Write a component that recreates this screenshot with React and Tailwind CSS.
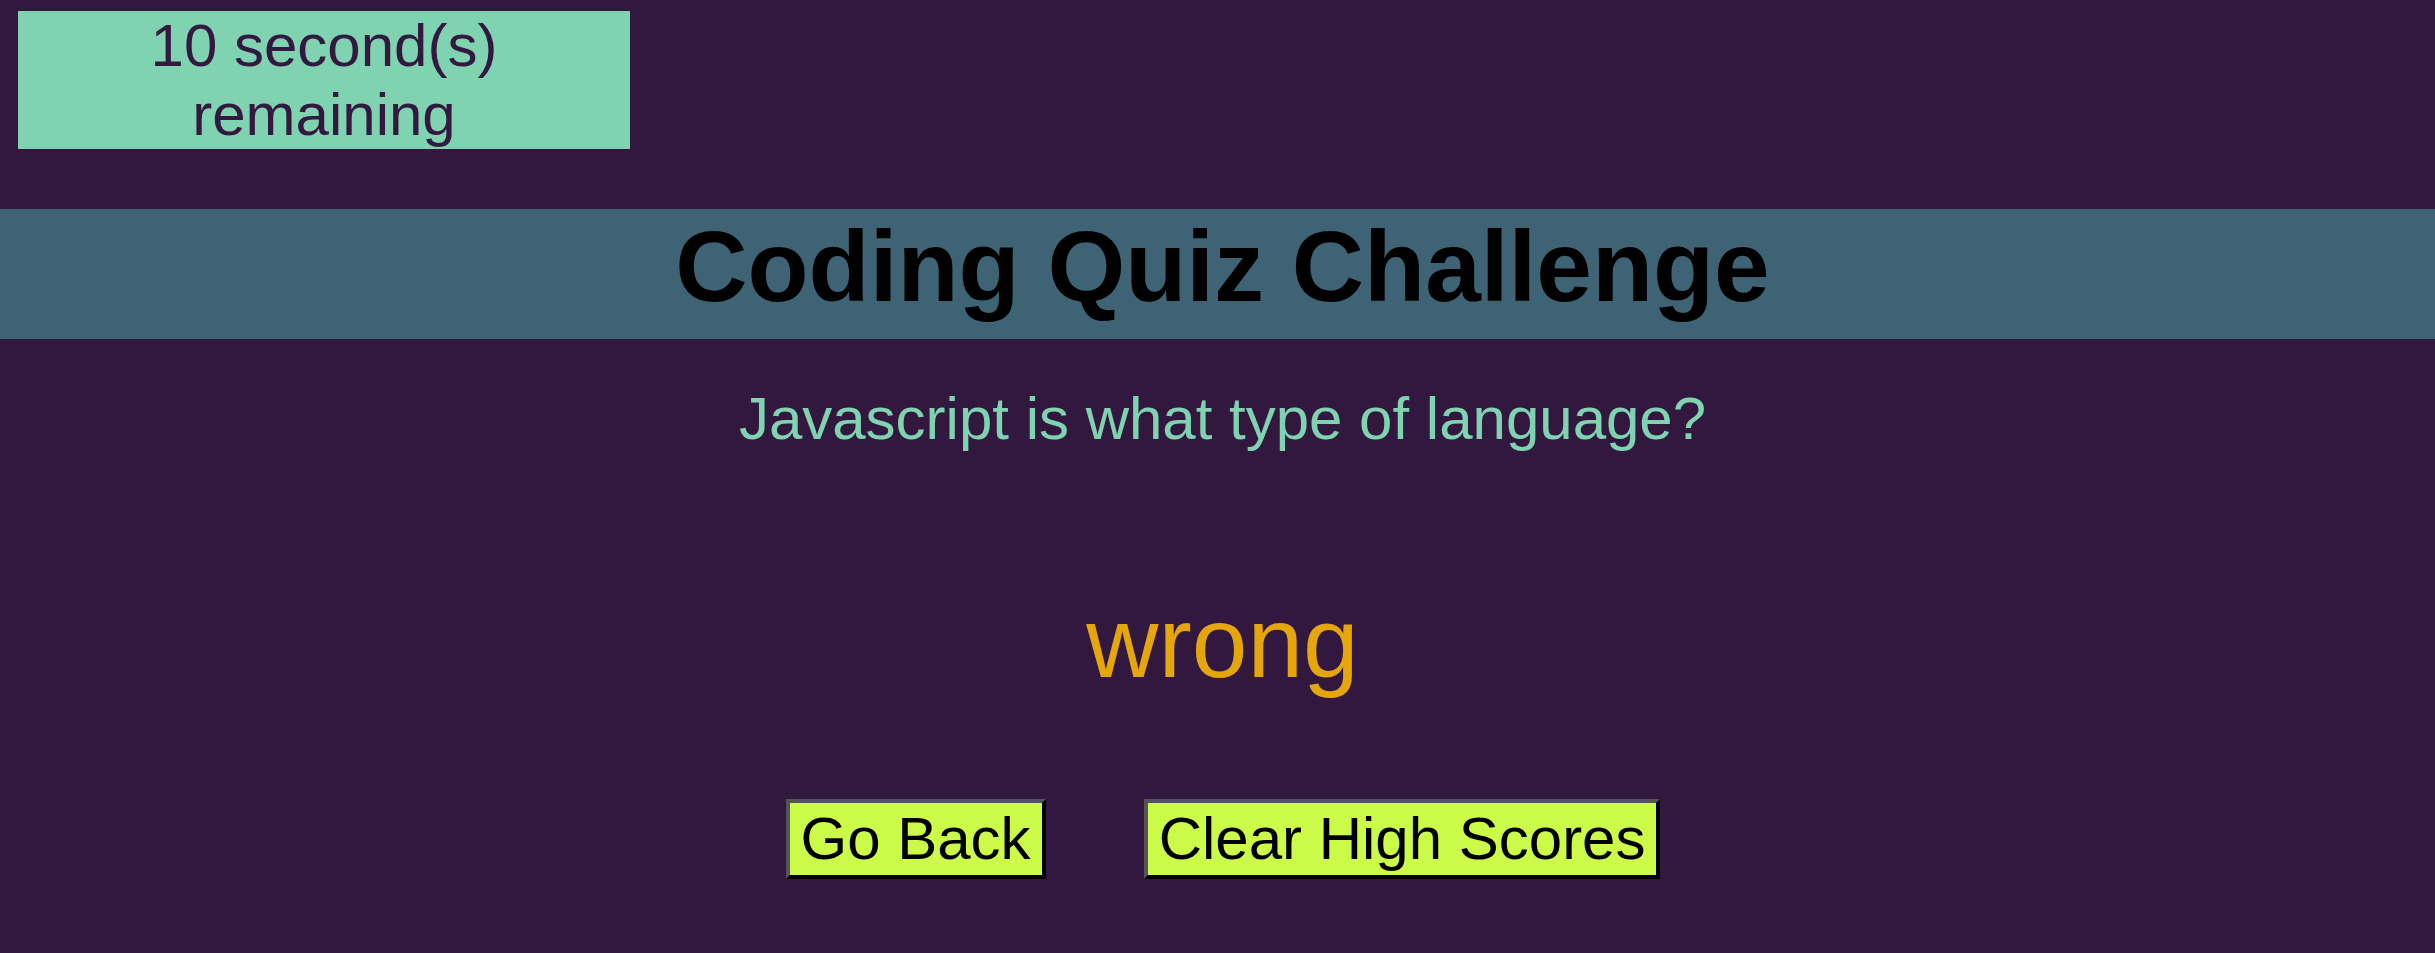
import React from 'react';

const App = () => {
  return (
    <div className="min-h-screen h-[953px] bg-[#32183f] font-['Liberation_Sans',Arial,sans-serif] overflow-hidden">
      {/* Timer */}
      <div className="pt-[11px] pl-[18px]">
        <div className="w-[612px] bg-[#80d3b1] text-[#33183f] text-[60px] leading-[69px] text-center">
          10 second(s) remaining
        </div>
      </div>

      {/* Header */}
      <header className="mt-[60px] h-[130px] bg-[#3d6374] pl-[10px]">
        <h1 className="text-center text-black font-bold text-[100px] leading-[115px]">
          Coding Quiz Challenge
        </h1>
      </header>

      {/* Question */}
      <p className="mt-[45px] pl-[10px] text-center text-[#80d3b1] text-[60px] leading-[69px]">
        Javascript is what type of language?
      </p>

      {/* Result */}
      <p className="mt-[132px] pl-[10px] text-center text-[#e4a60a] text-[100px] leading-[115px]">
        wrong
      </p>

      {/* Buttons */}
      <div className="mt-[99px] pl-[11px] flex justify-center gap-[98px]">
        <button className="bg-[#ccfa48] text-black text-[60px] leading-[70px] px-[11px] py-[1px] border-4 border-t-[#545458] border-l-[#545458] border-b-black border-r-black">
          Go Back
        </button>
        <button className="bg-[#ccfa48] text-black text-[60px] leading-[70px] px-[11px] py-[1px] border-4 border-t-[#545458] border-l-[#545458] border-b-black border-r-black">
          Clear High Scores
        </button>
      </div>
    </div>
  );
};

export default App;
